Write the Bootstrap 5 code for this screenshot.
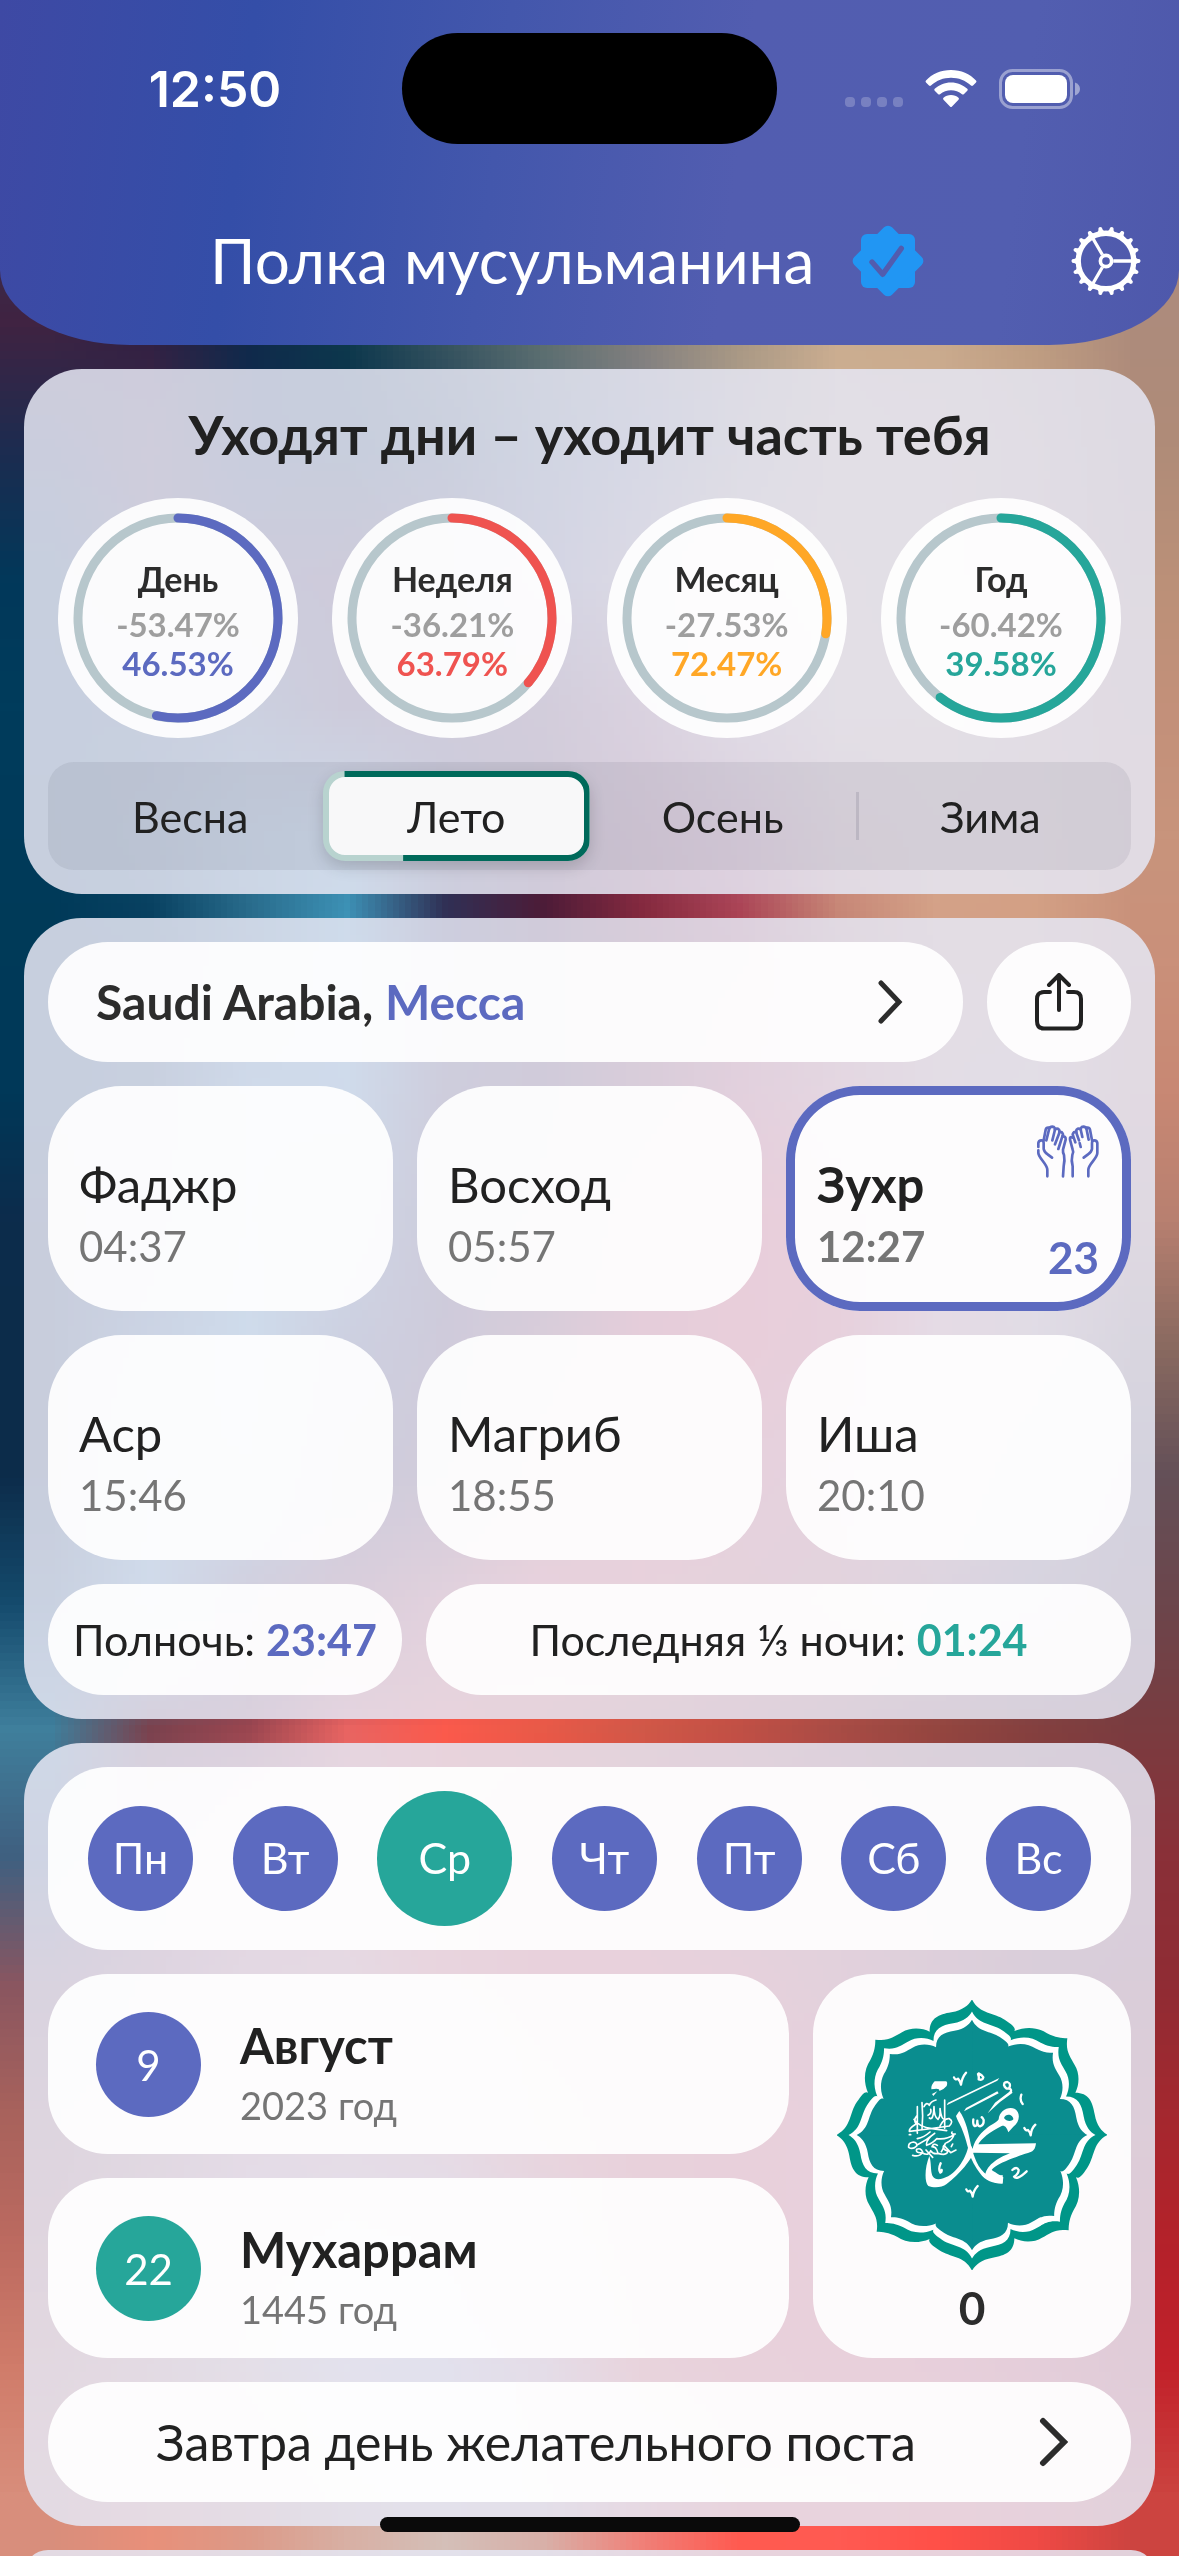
<!DOCTYPE html>
<html lang="ru">
<head>
<meta charset="utf-8">
<meta name="viewport" content="width=device-width, initial-scale=1">
<title>Полка мусульманина</title>
<link href="https://cdn.jsdelivr.net/npm/bootstrap@5.3.0/dist/css/bootstrap.min.css" rel="stylesheet">
<style>
:root{--indigo:#5c6ac0;--teal:#26a69a;--ink:#212121;--grey:#757575}
body{font-family:"Lato","Open Sans",sans-serif;color:var(--ink);background:#003a58;margin:0}
button{font-family:inherit;color:inherit;border:0;background:none;padding:0}
svg{display:block;flex:none}
.screen{height:100vh;overflow:hidden;position:relative;isolation:isolate;gap:24px}
.wallpaper{position:absolute;inset:0;width:100%;height:100%;z-index:-1}
.top-bar{background:linear-gradient(97deg,#3e49a4 0%,#344ea8 21%,#4357ac 42%,#525db0 62%,#525eb0 85%,#4e58ab 100%);border-radius:0 0 130px 130px/0 0 75px 75px;color:#fff;padding:33px 0 24px}
.status{display:grid;grid-template-columns:1fr 375px 1fr;align-items:center}
.clock{font:600 50px/60px "Inter",sans-serif;padding-left:28px}
.island{height:111px;border-radius:56px;background:#000}
.status-icons{padding-right:98px;gap:22px}
.title-row{margin-top:57px;height:120px;padding:0 38px 0 210px;gap:38px}
.title-row h1{font-size:62px;line-height:72px;font-weight:400;margin:0;padding-bottom:2px}
.panel{background:rgba(229,230,242,.87);border-radius:58px;padding:24px;margin:0 24px;gap:24px}
.tile{background:rgba(255,255,255,.93);border-radius:60px}
.motto{font-size:54px;line-height:80px;font-weight:700;margin:0;padding-top:2px}
.rings{padding:0 10px;margin-top:-1px}
.ring{width:240px;height:240px;border-radius:50%;position:relative}
.ring svg{position:absolute;inset:15px}
.ring .name{font-size:34px;line-height:52px;font-weight:700;color:#2c2c2c}
.ring .pct{font-size:33px;line-height:39px;font-weight:700}
.seasons{background:rgba(60,60,80,.09);border-radius:26px;padding:9px;display:grid;grid-template-columns:repeat(4,1fr)}
.seasons button{height:90px;font-size:43px;font-weight:400;position:relative;padding-top:2px}
.seasons .on{background:#f8f8f9;border:6px solid #b8d3cf;border-radius:22px;box-shadow:0 6px 16px rgba(0,0,0,.16)}
.seasons .on::before{content:"";position:absolute;inset:-6px;border:6px solid #006a5b;border-radius:22px;clip-path:polygon(8% 0,100% 0,100% 100%,30% 100%,30% 50%,8% 50%)}
.seasons .split{border-left:3px solid rgba(60,60,80,.14);height:48px;align-self:center}
.place{height:120px;padding:0 60px 0 48px;font-size:48px;font-weight:700;color:#2c2c2c}
.share{width:144px;height:120px}
.prayers{display:grid;grid-template-columns:repeat(3,1fr);gap:24px}
.prayer{height:225px;border-radius:74px;padding:0 32px 34px 31px;font-size:49px;line-height:62px}
.prayer .time,.year{color:var(--grey)}
.prayer .time{font-size:42px}
.now{box-shadow:inset 0 0 0 9px var(--indigo);font-weight:700}
.now .side{height:190px;line-height:40px;font-size:44px;padding-top:38px;color:var(--indigo)}
.night{height:111px;font-size:43px;border-radius:56px;white-space:nowrap;padding-top:2px}
.night b{font-size:43px}
.midnight{width:354px}
.week{padding:24px 40px;height:183px}
.dot{width:105px;height:105px;border-radius:50%;background:var(--indigo);color:#fff;font-size:43px;font-weight:400}
.dot.today{width:135px;height:135px}
.bg-teal{background:var(--teal)}
.c-indigo{color:var(--indigo)}.c-teal{color:var(--teal)}.c-red{color:#ef5350}.c-amber{color:#ffa726}.c-grey{color:#9e9e9e}
.date{height:180px;padding:0 48px;gap:39px}
.date .labels{font-size:49px;line-height:60px;font-weight:700;padding-top:22px}
.date .labels .year{font-size:38px;font-weight:400}
.date .dot{font-size:42px;padding-top:2px}
.salawat{width:318px;padding-top:26px;font-size:46px;line-height:56px;font-weight:700;color:#2c2c2c}
.salawat svg{margin-bottom:10px}
.fast{height:120px;padding:0 62px 0 108px;font-size:50px}
.home-bar{position:absolute;left:50%;bottom:24px;width:420px;height:15px;margin-left:-210px;border-radius:8px;background:#0a0a0a}
</style>
<script src="https://cdn.jsdelivr.net/npm/bootstrap@5.3.0/dist/js/bootstrap.bundle.min.js"></script>
</head>
<body>
<div class="screen d-flex flex-column">
<canvas class="wallpaper" id="wallpaper" width="12" height="20"></canvas>

<header class="top-bar flex-shrink-0">
  <div class="status">
    <div class="clock text-center">12:50</div>
    <div class="island"></div>
    <div class="status-icons d-flex justify-content-end align-items-center">
      <svg width="58" height="38" viewBox="0 0 58 38" fill="#fff" fill-opacity=".22"><rect x="0" y="27" width="10" height="10" rx="4"/><rect x="16" y="27" width="10" height="10" rx="4"/><rect x="32" y="27" width="10" height="10" rx="4"/><rect x="48" y="27" width="10" height="10" rx="4"/></svg>
      <svg width="52" height="38" viewBox="0 0 52 38" fill="#fff"><path d="M26 0C36 0 45 4 51 10.500Q52 11.500 51 12.500L48 15.500Q47 16.300 46 15.500C40.500 10.500 33.500 7.800 26 7.800S11.500 10.500 6 15.500Q5 16.300 4 15.500L1 12.500Q0 11.500 1 10.500C7 4 16 0 26 0Z"/><path d="M26 12.500C32.500 12.500 38 15 42.300 18.800Q43.300 19.800 42.300 20.800L39 24Q38 25 37 24.200C34 21.700 30 20.200 26 20.200S18 21.700 15 24.200Q14 25 13 24L9.700 20.800Q8.700 19.800 9.700 18.800C14 15 19.500 12.500 26 12.500Z"/><path d="M26 25C29 25 31.500 26 33.500 27.700Q34.500 28.700 33.500 29.700L27 36.500Q26 37.500 25 36.500L18.500 29.700Q17.500 28.700 18.500 27.700C20.500 26 23 25 26 25Z"/></svg>
      <svg width="82" height="40" viewBox="0 0 82 40"><rect x="1.500" y="1.500" width="71" height="37" rx="12" fill="none" stroke="#fff" stroke-opacity=".42" stroke-width="3"/><rect x="6" y="6" width="62" height="28" rx="8" fill="#fff"/><path d="M76 13.500C79 14.500 81 17 81 20S79 25.500 76 26.500Z" fill="#fff" fill-opacity=".45"/></svg>
    </div>
  </div>
  <div class="title-row d-flex align-items-center">
    <h1 class="text-nowrap">Полка мусульманина</h1>
    <svg width="72" height="72" viewBox="-108 -108 216 216"><g fill="#2196f3"><rect x="-81" y="-81" width="162" height="162" rx="18"/><rect x="-80" y="-80" width="160" height="160" rx="17" transform="rotate(45)"/></g><path d="M-48 3L-16 40L40 -38" fill="none" stroke="#525cae" stroke-width="16" stroke-linecap="round" stroke-linejoin="round"/></svg>
    <button class="ms-auto" aria-label="Настройки"><svg id="gear" width="70" height="70" viewBox="-106 -106 212 212" fill="none" stroke="#fff"><circle r="84" stroke-width="16"/><circle r="17" stroke-width="11"/><path stroke-width="10" d="M22 0H80M-11 -19L-40 -69M-11 19L-40 69"/></svg></button>
  </div>
</header>

<section class="panel d-flex flex-column flex-shrink-0 pt-4">
  <div>
    <h2 class="motto text-center">Уходят дни – уходит часть тебя</h2>
    <div class="rings d-flex justify-content-between pt-4" id="rings"></div>
  </div>
  <div class="seasons">
    <button>Весна</button>
    <button class="on">Лето</button>
    <button>Осень</button>
    <div class="d-flex align-items-center"><span class="split"></span><button class="flex-grow-1">Зима</button></div>
  </div>
</section>

<section class="panel d-flex flex-column flex-shrink-0">
  <div class="d-flex gap-4">
    <button class="tile place flex-grow-1 d-flex align-items-center justify-content-between"><span>Saudi Arabia, <span class="c-indigo">Месса</span></span>
      <svg width="25" height="44" viewBox="0 0 25 44" fill="none" stroke="#2c2c2c" stroke-width="5" stroke-linecap="round"><path d="M3 3L21 22L3 41"/></svg></button>
    <button class="tile share d-flex align-items-center justify-content-center" aria-label="Поделиться"><svg width="48" height="58" viewBox="0 0 48 58" fill="none" stroke="#212121" stroke-width="4" stroke-linecap="round" stroke-linejoin="round"><path d="M15 19H9Q2 19 2 26V48Q2 55.500 9 55.500H39Q46 55.500 46 48V26Q46 19 39 19H33M24 37V3M14 12L24 2L34 12"/></svg></button>
  </div>
  <div class="prayers">
    <div class="tile prayer d-flex flex-column justify-content-end"><div>Фаджр</div><div class="time">04:37</div></div>
    <div class="tile prayer d-flex flex-column justify-content-end"><div>Восход</div><div class="time">05:57</div></div>
    <div class="tile prayer now d-flex justify-content-between align-items-end"><div><div>Зухр</div><div class="time">12:27</div></div>
      <div class="side d-flex flex-column justify-content-between align-items-end">
        <svg width="62" height="54" viewBox="0 0 186 162" fill="none" stroke="#5c6ac0" stroke-width="8" stroke-linecap="round" stroke-linejoin="round"><g id="palm"><path d="M31 154V134C31 118 4 98 4 84V76"/><path d="M4 66V54Q5 46 13 46Q20 46 20 54V72Q22 82 32 88L45 98"/><path d="M20 46L26 14Q28 6 37 8"/><path d="M28 46L36 14Q38 5 46 5Q56 6 53 18L46 46"/><path d="M54 14Q60 8 66 14Q69 18 66 26L54 58"/><path d="M67 21Q76 20 78 28L64 72"/><path d="M76 34Q87 33 86 44L78 74Q77 82 81 90Q84 106 80 124L78 154"/></g><g transform="translate(185 0) scale(-1 1)"><path d="M31 154V134C31 118 4 100 4 84V54Q5 46 13 46Q20 46 20 54V72Q22 82 32 88L45 98"/><path d="M20 46L26 14Q28 6 37 8"/><path d="M30 44L36 14Q38 5 46 5Q56 6 53 18L49 36"/><path d="M54 14Q60 8 66 14Q69 18 66 26L59 46M57 54L54 66"/><path d="M67 21Q76 20 78 28L70 52"/><path d="M78 38Q88 33 86 44L78 74Q74 82 79 90Q83 106 78 124L78 154"/></g></svg>
        <div>23</div>
      </div></div>
    <div class="tile prayer d-flex flex-column justify-content-end"><div>Аср</div><div class="time">15:46</div></div>
    <div class="tile prayer d-flex flex-column justify-content-end"><div>Магриб</div><div class="time">18:55</div></div>
    <div class="tile prayer d-flex flex-column justify-content-end"><div>Иша</div><div class="time">20:10</div></div>
  </div>
  <div class="d-flex gap-4">
    <div class="tile night midnight d-flex align-items-center justify-content-center"><span>Полночь: <b class="c-indigo">23:47</b></span></div>
    <div class="tile night flex-grow-1 d-flex align-items-center justify-content-center"><span>Последняя ⅓ ночи: <b class="c-teal">01:24</b></span></div>
  </div>
</section>

<section class="panel d-flex flex-column flex-shrink-0">
  <div class="tile week d-flex align-items-center justify-content-between">
    <button class="dot">Пн</button><button class="dot">Вт</button><button class="dot today bg-teal">Ср</button><button class="dot">Чт</button><button class="dot">Пт</button><button class="dot">Сб</button><button class="dot">Вс</button>
  </div>
  <div class="d-flex gap-4">
    <div class="flex-grow-1 d-flex flex-column gap-4">
      <div class="tile date d-flex align-items-center"><div class="dot d-flex align-items-center justify-content-center">9</div><div class="labels"><div>Август</div><div class="year">2023 год</div></div></div>
      <div class="tile date d-flex align-items-center"><div class="dot bg-teal d-flex align-items-center justify-content-center">22</div><div class="labels"><div>Мухаррам</div><div class="year">1445 год</div></div></div>
    </div>
    <button class="tile salawat d-flex flex-column align-items-center justify-content-start">
      <svg width="270" height="270" viewBox="111 120 810 810">
        <defs>
          <path id="q" d="M0 -407C22 -362 65 -368 98 -346C125 -328 132 -320 127 -312C165 -328 200 -322 225 -305C250 -292 268 -290 286 -290C280 -250 295 -235 308 -210C324 -185 322 -150 310 -127C350 -127 362 -100 368 -62C375 -25 390 -10 407 0L0 4L-4 0Z"/>
          <g id="rosette"><use href="#q"/><use href="#q" transform="rotate(90)"/><use href="#q" transform="rotate(180)"/><use href="#q" transform="rotate(270)"/></g>
        </defs>
        <g transform="translate(516 525)"><use href="#rosette" fill="#009688"/><use href="#rosette" fill="#fff" transform="scale(.91)"/><use href="#rosette" fill="#0a8d8f" transform="scale(.85)"/></g>
        <g fill="#fff">
          <path d="M468 468L478 453C498 480 506 520 513 556C524 600 540 640 575 650L608 645L608 671C585 672 555 664 540 640C525 620 514 600 508 580C490 500 475 490 468 468Z"/>
          <path d="M507 548C500 600 460 655 415 658C385 655 398 620 388 588C375 620 372 665 385 678C400 684 425 684 440 672C480 640 515 600 522 572Z"/>
          <path fill-rule="evenodd" d="M596 478C598 452 625 438 645 447C662 458 660 485 640 500L625 517C620 500 612 495 605 498C570 515 545 535 535 553L708 550C706 565 702 572 692 576C650 590 590 610 575 630C590 640 605 648 610 652L608 668C580 668 562 662 556 650C555 620 590 595 630 580L518 578C515 560 530 528 560 505C575 492 590 488 596 478ZM612 474C618 484 634 486 640 478C640 464 618 458 612 474Z"/>
          <path d="M404 364H438Q444 366 440 378Q430 390 418 393Q420 382 394 388Q392 376 404 364ZM396 402L412 394L400 408Z"/>
          <path d="M440 436L444 428L598 354L592 362ZM492 454L498 444L592 394L596 400ZM563 460L585 428L632 392L638 398L600 426Z"/>
        </g>
        <g fill="none" stroke="#fff" stroke-width="7" stroke-linecap="round" stroke-linejoin="round">
          <path d="M534 342Q538 352 536 358Q548 362 550 352Q546 344 536 340M614 380Q608 366 622 366Q634 370 628 384Q618 390 612 376M628 386Q636 388 632 396"/>
          <path d="M462 352Q466 362 474 356Q480 362 483 374Q486 352 498 338M673 504Q678 514 684 510Q690 516 692 526Q694 505 706 494M499 688Q503 698 510 692Q516 698 518 710Q520 692 533 678"/>
          <path d="M664 404Q658 420 668 432M422 610Q414 628 421 638Q426 636 425 630"/>
          <path d="M520 478Q518 494 524 498Q532 500 532 482Q532 498 540 499Q552 496 551 480Q546 470 545 472"/>
          <path d="M637 630Q650 618 656 630Q656 642 642 650Q650 662 680 634"/>
        </g>
        <g fill="none" stroke="#fff" stroke-width="5" stroke-linecap="round" stroke-linejoin="round">
          <path d="M366 428Q370 470 366 508M434 420V505M388 474Q400 484 402 440Q402 470 414 478Q422 470 420 446Q424 480 434 478M372 440Q380 424 388 436Q392 424 408 420M392 448Q396 460 384 466"/>
          <path d="M350 468Q340 480 348 492Q326 506 328 514Q380 508 448 498Q462 484 448 476Q432 474 420 498M352 440V520M342 478Q356 500 396 506L440 512"/>
          <path d="M326 562Q324 548 340 546Q352 548 350 558Q338 570 326 562M350 556Q380 540 404 520Q376 540 380 556Q400 548 410 536Q440 540 462 524Q458 540 440 548M390 516Q372 532 352 536M456 516Q452 524 466 522"/>
          <path d="M338 586Q360 592 368 576Q362 562 350 568Q346 580 366 578Q386 590 392 572Q400 584 414 580Q410 560 396 560Q400 548 412 556M414 580Q440 588 444 574Q424 566 432 556L452 578L468 570M436 550Q428 570 424 575M378 570L398 592M328 524H332M458 552L454 560"/>
        </g>
      </svg>
      <span>0</span>
    </button>
  </div>
  <button class="tile fast d-flex align-items-center justify-content-between"><span>Завтра день желательного поста</span>
    <svg width="30" height="50" viewBox="0 0 30 50" fill="none" stroke="#2c2c2c" stroke-width="6" stroke-linecap="round"><path d="M4 4L25 25L4 46"/></svg></button>
</section>

<section class="panel flex-shrink-0"></section>
<div class="home-bar"></div>
</div>
<script>
// Wallpaper: coarse colour mesh, smoothed by the browser when it is scaled up
const mesh = [
"373050 301f42 10294a 0e3a4d 3a5760 5f706e 85807a a89782 caad91 c9aa8d bd9c80 ad8b7c",
"373050 301f42 10294a 0e3a4d 3a5760 5f706e 85807a a89782 caad91 c9aa8d bd9c80 ad8b7c",
"402342 301f42 10294a 0e3a4d 3a5760 5f706e 85807a a89782 caad91 c9aa8d bd9c80 ad8b7c",
"1c2c50 402a48 102c50 08304c 20405a 506878 7a8090 b0a090 d0b090 cfae92 c6a288 b08c78",
"02385a 38304c 30204a 381c40 4a3050 606080 a08888 c8a890 d4b294 d0b090 caa088 bb9078",
"003c5c 143c60 2a4464 301c40 401c40 5a2840 904c60 b89088 d4b094 d4b090 cea288 c3907a",
"003a5a 0c4868 2a7090 3a88ac 303050 501c38 8a2c48 b0506a d09080 d4a488 d2a086 c8947c",
"003a58 063c5c 286888 3f98bc 30305a 4a1c38 802838 a83c48 c08070 d4a088 d4a084 ca907a",
"003858 104060 408ab0 4090b8 38284a 4a1c38 8a2838 d04050 e07070 d4a090 d0a898 c88874",
"0c2c4c 1c4a6a 3a88ac 3c7090 301c40 602038 d02c38 ff3040 ff4048 e89080 d8a090 b88070",
"0c2c4a 28608a 3f98bc 30406a 401c40 8a2838 e82c38 ff3038 f04048 e89090 c09890 8a6a60",
"0c2c4a 3a88ac 3f88a8 38284a 50203c c83040 ff3840 f04850 e05058 d07070 907070 645058",
"144a6c 4a90b4 503a58 903044 d04a50 ff5050 f85048 e05048 d05850 a86060 785860 6c464c",
"3f7f9c 7a424e 9a4650 e86462 fb5a4c e85a48 d05848 c05045 a84c45 944640 84403f 7a3c40",
"3f6080 9a5060 d06868 f07068 ff5a48 ff4840 f04848 d04848 c04448 a03c40 8c3438 8a3038",
"8a5660 b06068 d88080 e88880 ff6058 ff4848 ff4848 f04848 d04448 b03c40 903038 902c34",
"a8625c c07870 e09090 e89890 f08880 ff6050 ff4840 ff4040 f84048 d83c40 b83038 a4282f",
"bc6a60 d08878 dca0a0 e0b0b0 e0a8a8 f07068 ff4840 ff4040 ff4048 f03c40 d03038 b4222a",
"d07c6a d89080 dcb0a0 d4c4c8 d0c0c8 e0a0a0 ff5848 ff4840 ff4040 f83c40 e03038 c2212a",
"d88e7c e8907a dc9a88 d8b0a4 d4bfb8 d8b0a8 f08078 ff5a50 ff5a52 ff5048 f04a45 cc4440"];
const ctx = document.getElementById('wallpaper').getContext('2d');
mesh.forEach((row, y) => row.split(' ').forEach((c, x) => { ctx.fillStyle = '#' + c; ctx.fillRect(x, y, 1, 1); }));

const periods = [['День', 53.47, 46.53, 'c-indigo'], ['Неделя', 36.21, 63.79, 'c-red'], ['Месяц', 27.53, 72.47, 'c-amber'], ['Год', 60.42, 39.58, 'c-teal']];
document.getElementById('rings').innerHTML = periods.map(([n, a, b, c]) => `
<div class="tile ring text-center d-flex flex-column justify-content-center">
<svg class="${c}" width="210" height="210" viewBox="0 0 210 210" fill="none" stroke-width="9"><circle cx="105" cy="105" r="100" stroke="#b7c7cc"/><circle cx="105" cy="105" r="100" stroke="currentColor" stroke-linecap="round" pathLength="100" stroke-dasharray="${a} 100" transform="rotate(-90 105 105)"/></svg>
<div class="name">${n}</div><div class="pct c-grey">-${a}%</div><div class="pct ${c}">${b}%</div></div>`).join('');

const teeth = Array.from({length: 18}, (_, i) => `<path transform="rotate(${i * 20})" fill="#fff" stroke="none" d="M86 -14L94 -7L102 -5Q107 0 102 5L94 7L86 14Z"/>`).join('');
document.getElementById('gear').insertAdjacentHTML('beforeend', teeth);
</script>
</body>
</html>
